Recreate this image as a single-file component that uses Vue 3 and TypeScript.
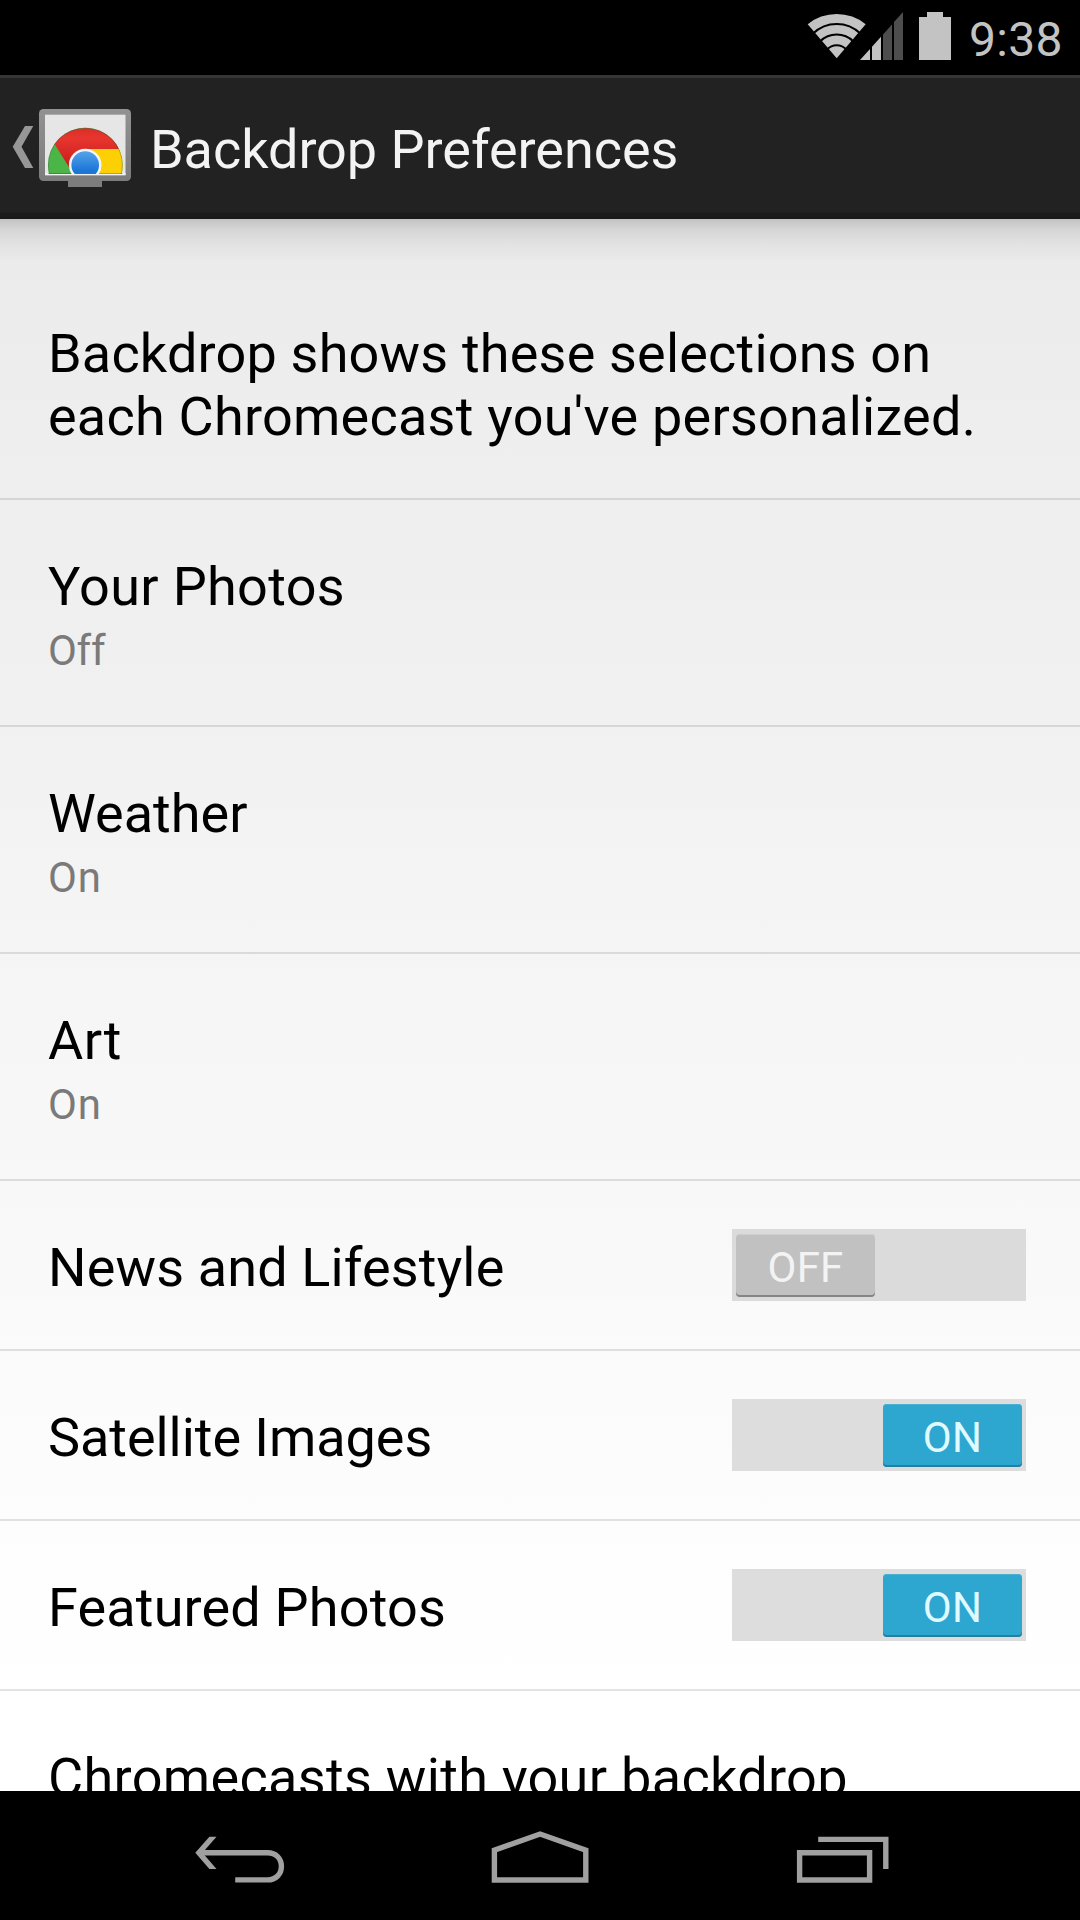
<script setup lang="ts">
interface Entry {
  title: string
  spacing: number
  summary?: string
  summarySpacing?: number
  toggle?: boolean
}

const intro: { text: string; spacing: number }[] = [
  { text: 'Backdrop shows these selections on', spacing: 0.19 },
  { text: "each Chromecast you've personalized.", spacing: 0.24 },
]

const entries: Entry[] = [
  { title: 'Your Photos', spacing: 0.33, summary: 'Off', summarySpacing: -0.3 },
  { title: 'Weather', spacing: 0, summary: 'On', summarySpacing: 0.8 },
  { title: 'Art', spacing: 0.4, summary: 'On', summarySpacing: 0.8 },
  { title: 'News and Lifestyle', spacing: 0.14, toggle: false },
  { title: 'Satellite Images', spacing: -0.05, toggle: true },
  { title: 'Featured Photos', spacing: 0.17, toggle: true },
  { title: 'Chromecasts with your backdrop', spacing: 0.33 },
]
</script>

<template>
  <div class="screen">
    <header class="status-bar">
      <svg class="status-icons" width="150" height="75" viewBox="804 0 150 75">
        <g fill="#c3c3c3">
          <path d="M836.7 58.3 807.7 24.3A44.7 43.6 0 0 1 865.7 24.3Z" />
          <path d="M860 60 870 49V60ZM872 60V46.8L881 36.8V60Z" />
          <path d="M919 17H927V12H943V17H951V60H919Z" />
        </g>
        <path fill="#4d4d4d" d="M883 60V34.5L892 24.5V60ZM894 60V22L903 12V60Z" />
        <g fill="none" stroke="#000" stroke-width="2">
          <path d="M813 33.5A34 34 0 0 1 860.4 33.5" />
          <path d="M820 41.5A23.6 23.6 0 0 1 853.4 41.5" />
          <path d="M827 49.5A13 13 0 0 1 846.4 49.5" />
        </g>
      </svg>
      <span class="clock">9:38</span>
    </header>

    <div class="action-bar">
      <svg class="app-icon" width="140" height="90" viewBox="0 104 140 90">
        <defs>
          <linearGradient id="frame" x1="0" y1="0" x2="0" y2="1">
            <stop offset="0" stop-color="#929292" />
            <stop offset="1" stop-color="#7c7c7c" />
          </linearGradient>
          <linearGradient id="red" x1="0" y1="0" x2="0" y2="1">
            <stop offset="0" stop-color="#d82f28" />
            <stop offset="0.25" stop-color="#e8352e" />
            <stop offset="1" stop-color="#c51c1c" />
          </linearGradient>
          <linearGradient id="blue" x1="0" y1="0" x2="0" y2="1">
            <stop offset="0" stop-color="#55a4ea" />
            <stop offset="0.7" stop-color="#1c76d6" />
          </linearGradient>
          <clipPath id="dome"><rect x="45" y="114" width="81" height="60" /></clipPath>
        </defs>
        <path fill="#979797" d="M12.7 146.7 25 126H33.3L21.5 146.7 33.3 168H25Z" />
        <rect x="39" y="109" width="92" height="72" rx="4.5" fill="url(#frame)" />
        <rect x="68" y="180" width="34" height="7" fill="#7d7d7d" />
        <rect x="45" y="114.7" width="80.5" height="60.5" fill="#e6e6e6" />
        <rect x="45" y="173" width="80.5" height="2.2" fill="#f3f3f3" />
        <g clip-path="url(#dome)">
          <circle cx="85.3" cy="165" r="37.3" fill="#4bb548" />
          <path fill="#fdd006" d="M85.3 148.7H118.8A37.3 37.3 0 0 1 121.6 174H85.3Z" />
          <path fill="url(#red)" d="M54.7 144.2A37.3 37.3 0 0 1 118.8 148.9H85.3L69.5 168Z" />
          <circle cx="85.3" cy="165" r="37" fill="none" stroke="#000" stroke-opacity=".22" stroke-width=".8" />
          <path d="M48 173.6H122.6" stroke="#000" stroke-opacity=".3" stroke-width=".8" />
          <circle cx="85.2" cy="165" r="16.3" fill="#f4f6f8" />
          <circle cx="85.2" cy="165" r="13.8" fill="url(#blue)" />
        </g>
      </svg>
      <h1>Backdrop Preferences</h1>
    </div>

    <main class="content">
      <section class="intro">
        <div v-for="line in intro" :key="line.text" :style="{ letterSpacing: line.spacing + 'px' }">{{ line.text }}</div>
      </section>
      <section v-for="entry in entries" :key="entry.title" class="entry" :class="{ tall: entry.summary }">
        <div class="labels">
          <div class="title" :style="{ letterSpacing: entry.spacing + 'px' }">{{ entry.title }}</div>
          <div v-if="entry.summary" class="summary" :style="{ letterSpacing: entry.summarySpacing + 'px' }">{{ entry.summary }}</div>
        </div>
        <div v-if="entry.toggle !== undefined" class="track" :class="{ on: entry.toggle }">
          <div class="thumb">{{ entry.toggle ? 'ON' : 'OFF' }}</div>
        </div>
      </section>
    </main>

    <nav class="nav-bar">
      <svg width="1080" height="129" viewBox="0 1791 1080 129" fill="none" stroke="#a0a0a0" stroke-width="5.4">
        <path d="M201 1852.8H267.5C276 1852.8 281.4 1858.5 281.4 1866.3S276 1879.9 267.5 1879.9H235.2" />
        <path fill="#a0a0a0" stroke="none" d="M195.3 1852.7 209.4 1836.7H216.5L202.5 1852.7 216.5 1869H209.4Z" />
        <path d="M494.4 1880V1850.2L540.1 1834 585.8 1850.2V1880Z" />
        <path d="M799.6 1852.7H869.6V1880H799.6Z" />
        <path d="M818.2 1839.4H885.8V1869" />
      </svg>
    </nav>
  </div>
</template>

<style>
body {
  margin: 0;
  background: #000;
}
</style>

<style scoped>
.screen {
  display: flex;
  flex-direction: column;
  width: 1080px;
  height: 1920px;
  overflow: hidden;
  background: #000;
  font-family: Roboto, "Noto Sans", sans-serif;
}
.status-bar {
  display: flex;
  flex: none;
  justify-content: flex-end;
  height: 75px;
  color: #c3c3c3;
}
.status-icons {
  flex: none;
}
.clock {
  box-sizing: border-box;
  width: 111px;
  height: 75px;
  margin-left: 15px;
  padding-top: 11px;
  margin-right: 0;
  font-size: 48px;
  line-height: 57px;
  letter-spacing: 0.3px;
}
.status-bar .clock {
  flex: none;
}
.action-bar {
  box-sizing: border-box;
  display: flex;
  flex: none;
  align-items: flex-start;
  height: 144px;
  border-top: 3px solid #353535;
  background: linear-gradient(#222 0, #222 134px, #1c1c1c 135px, #191919 141px);
}
.app-icon {
  flex: none;
  margin-top: 26px;
}
h1 {
  margin: 40px 0 0 10px;
  color: #f3f3f3;
  font-size: 54px;
  font-weight: 400;
  line-height: 63px;
  letter-spacing: -0.04px;
  white-space: nowrap;
}
.content {
  flex: none;
  height: 1572px;
  overflow: hidden;
  color: #000;
  background:
    linear-gradient(rgba(0, 0, 0, 0.17), rgba(0, 0, 0, 0.09) 10px, rgba(0, 0, 0, 0.04) 24px, rgba(0, 0, 0, 0) 42px) top / 100% 42px no-repeat,
    linear-gradient(#eaeaea, #eeeeee 200px, #f0f0f0 430px, #f5f5f5 730px, #f9f9f9 1040px, #fdfdfd 1300px, #ffffff 1480px);
}
.intro {
  box-sizing: border-box;
  height: 281px;
  padding: 103px 48px 0;
  border-bottom: 2px solid rgba(0, 0, 0, 0.1);
  font-size: 54px;
  line-height: 63px;
  white-space: nowrap;
}
.entry {
  box-sizing: border-box;
  display: flex;
  align-items: flex-start;
  justify-content: space-between;
  height: 170px;
  padding: 0 54px 0 48px;
  border-bottom: 2px solid rgba(0, 0, 0, 0.11);
  white-space: nowrap;
}
.entry.tall {
  height: 227px;
}
.labels {
  padding-top: 55px;
}
.title {
  font-size: 54px;
  line-height: 63px;
}
.summary {
  margin-top: 8px;
  color: #7a7a7a;
  font-size: 42px;
  line-height: 49px;
}
.track {
  box-sizing: border-box;
  display: flex;
  width: 294px;
  height: 72px;
  margin-top: 48px;
  padding: 5px 4px 4px;
  background: #dbdbdb;
}
.thumb {
  box-sizing: border-box;
  width: 139px;
  height: 63px;
  padding-top: 9px;
  border-radius: 4px;
  background: #c1c1c1;
  box-shadow: inset 0 -2px 0 #858585, inset 0 1px 0 #cecece;
  color: #f3f3f3;
  font-size: 42px;
  line-height: 49px;
  text-align: center;
  letter-spacing: 0.2px;
}
.track.on {
  justify-content: flex-end;
  background: #dddddd;
}
.track.on .thumb {
  background: #2da6d0;
  box-shadow: inset 0 -2px 0 #277f9f, inset 0 1px 0 #4aafd0;
  color: #e0fbff;
}
.nav-bar {
  display: flex;
  flex: none;
  height: 129px;
  background: #000;
}
</style>
